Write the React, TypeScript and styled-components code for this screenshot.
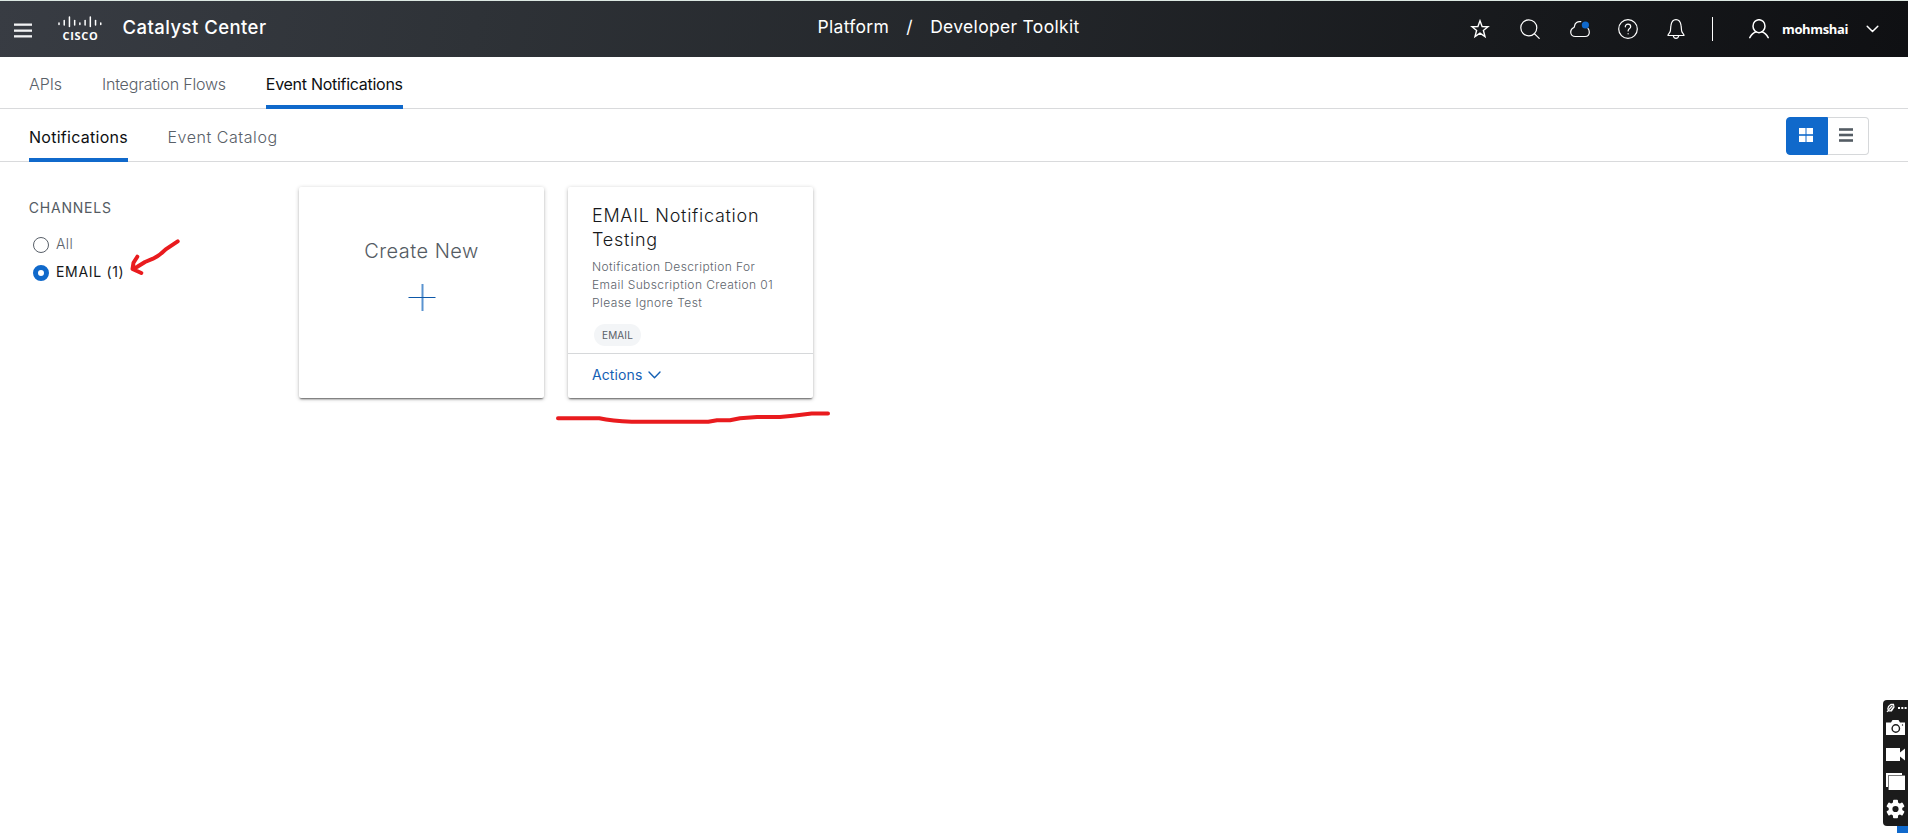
import React from "react";
import styled, { createGlobalStyle } from "styled-components";

const blue = "#1069cb";

const GlobalStyle = createGlobalStyle`
  *, *::before, *::after { box-sizing: border-box; }
  body {
    margin: 0;
    background: #fff;
    font-family: Inter, "Liberation Sans", sans-serif;
    color: #16181b;
    overflow: hidden;
  }
  h1, h2, h3, p { margin: 0; }
  button { font: inherit; border: 0; padding: 0; background: none; cursor: pointer; }
  svg { display: block; flex: none; }
`;

const Page = styled.div`
  position: relative;
  display: flex;
  flex-direction: column;
  width: 100%;
  height: 100vh;
  overflow: hidden;
`;

const Header = styled.header`
  display: grid;
  grid-template-columns: 817.5px 1fr auto;
  align-items: center;
  height: 57px;
  border-top: 1px solid #dce8e2;
  background: linear-gradient(100deg, #383c43 0%, #2e3237 25%, #23262a 53%, #17191c 80%, #0f1013 100%) padding-box;
  color: #fff;
`;

const Brand = styled.div`
  display: flex;
  align-items: center;
  padding-left: 14px;
`;

const MenuIcon = styled.svg`
  margin-top: 3px;
  fill: #f1f2f3;
`;

const Logo = styled.div`
  display: flex;
  flex-direction: column;
  align-items: center;
  width: 44px;
  margin-left: 26px;
`;

const LogoText = styled.span`
  margin-top: 1px;
  font: 700 11px/14px "Open Sans", sans-serif;
  letter-spacing: 0.75px;
  margin-right: -1px;
`;

const ProductName = styled.h1`
  margin: 0 0 5px 20.5px;
  font-size: 18.5px;
  font-weight: 500;
  line-height: 24px;
  letter-spacing: 0.45px;
`;

const Breadcrumb = styled.div`
  display: flex;
  align-items: center;
  margin-bottom: 5px;
  font-size: 17.5px;
  line-height: 24px;
  letter-spacing: 0.31px;
`;

const Slash = styled.span`
  width: 41px;
  padding-left: 17px;
`;

const HeaderTools = styled.div`
  display: flex;
  align-items: center;
  padding-right: 29px;
`;

const ToolButton = styled.button<{ $gap: number }>`
  margin-left: ${(p) => p.$gap}px;
  color: #fff;
`;

const Divider = styled.span`
  width: 1px;
  height: 24px;
  margin: 0 36px 0 26px;
  background: #fff;
`;

const UserName = styled.span`
  width: 68px;
  margin: 0 16px 0 13px;
  font: 700 13px/20px "Open Sans", sans-serif;
  letter-spacing: -0.35px;
`;

const TabBar = styled.nav<{ $height: number }>`
  display: flex;
  flex: none;
  align-items: flex-start;
  gap: 40px;
  height: ${(p) => p.$height}px;
  padding-left: 29px;
  border-bottom: 1px solid #d9dadc;
`;

const Tab = styled.button<{ $active?: boolean; $height: number; $spacing: number; $indent?: number; $drop: number }>`
  display: flex;
  height: ${(p) => p.$height}px;
  padding-top: ${(p) => p.$drop}px;
  border-bottom: 4px solid ${(p) => (p.$active ? blue : "transparent")};
  color: ${(p) => (p.$active ? "#0d0f12" : "#596068")};
  font-size: 16px;
  font-weight: ${(p) => (p.$active ? 400 : 300)};
  line-height: 20px;
  letter-spacing: ${(p) => p.$spacing}px;
  text-indent: ${(p) => p.$indent ?? 0}px;
  white-space: nowrap;
`;

const ViewToggle = styled.div`
  display: flex;
  width: 83px;
  height: 38px;
  margin: 8px 39px 0 auto;
`;

const ToggleButton = styled.button<{ $on?: boolean }>`
  display: flex;
  align-items: center;
  width: ${(p) => (p.$on ? 42 : 41)}px;
  padding: 0 0 2px ${(p) => (p.$on ? 12 : 11)}px;
  border: 1px solid ${(p) => (p.$on ? blue : "#d6d8da")};
  border-left-width: ${(p) => (p.$on ? 1 : 0)}px;
  border-radius: ${(p) => (p.$on ? "4px 0 0 4px" : "0 4px 4px 0")};
  background: ${(p) => (p.$on ? blue : "#fff")};
  color: ${(p) => (p.$on ? "#fff" : "#545c64")};
`;

const Main = styled.main`
  display: flex;
  padding-left: 28px;
`;

const Sidebar = styled.aside`
  width: 271px;
  padding-top: 36px;
`;

const SidebarTitle = styled.h2`
  margin: 0 0 12px 0.7px;
  color: #545b63;
  font-size: 14px;
  font-weight: 400;
  line-height: 20px;
  letter-spacing: 0.8px;
`;

const Option = styled.label<{ $on?: boolean }>`
  display: flex;
  align-items: center;
  gap: 7px;
  height: 28px;
  padding: 0 0 1px 5px;
  color: ${(p) => (p.$on ? "#16181b" : "#5d646c")};
  font-size: 14px;
  font-weight: ${(p) => (p.$on ? 400 : 300)};
  letter-spacing: ${(p) => (p.$on ? 0.68 : 0.4)}px;
`;

const Radio = styled.span<{ $on?: boolean }>`
  width: 16px;
  height: 16px;
  margin-top: 3px;
  border: ${(p) => (p.$on ? `5px solid ${blue}` : "1px solid #596069")};
  border-radius: 50%;
`;

const Cards = styled.section`
  display: flex;
  gap: 24px;
  padding-top: 25px;
`;

const Card = styled.article`
  display: flex;
  flex-direction: column;
  width: 245px;
  height: 211px;
  border-radius: 2px;
  background: #fff;
  box-shadow: 0 2px 2px -1px rgba(0, 0, 0, 0.55), 0 1px 4px rgba(0, 0, 0, 0.24);
`;

const CreateCard = styled(Card)`
  align-items: center;
  padding-top: 52px;
`;

const CreateLabel = styled.h3`
  margin-bottom: 21px;
  color: #545b63;
  font-size: 20px;
  font-weight: 300;
  line-height: 24px;
  letter-spacing: 0.45px;
`;

const CardBody = styled.div`
  flex: 1;
  padding: 17px 22px 0 24px;
`;

const CardTitle = styled.h3`
  color: #16181b;
  font-size: 18px;
  font-weight: 300;
  line-height: 24px;
  letter-spacing: 0.72px;
`;

const CardText = styled.p`
  max-width: 190px;
  margin-top: 6px;
  color: #5d646c;
  font-size: 12px;
  font-weight: 300;
  line-height: 18px;
  letter-spacing: 0.41px;
`;

const Chip = styled.span`
  display: flex;
  align-items: center;
  justify-content: center;
  width: 47px;
  height: 22px;
  margin: 12px 0 0 2px;
  border-radius: 11px;
  background: #f3f5f7;
  color: #596068;
  font-size: 10px;
  letter-spacing: 0.15px;
`;

const CardFooter = styled.footer`
  display: flex;
  align-items: center;
  gap: 6px;
  height: 45px;
  padding: 0 0 3px 24px;
  border-top: 1px solid #d6d8da;
  color: #1460b4;
  font-size: 14px;
  letter-spacing: 0.1px;
`;

const CapturePanel = styled.aside`
  position: absolute;
  right: 0;
  top: 700px;
  display: flex;
  flex-direction: column;
  width: 25px;
  height: 126px;
  padding: 3px 3px 0;
  border-radius: 4px 0 0 4px;
  background: #1b1b1b;
  color: #fff;
`;

const CaptureTop = styled.div`
  display: flex;
  align-items: center;
  gap: 3px;
  height: 10px;
  margin: 0 -2px 7px 0;
`;

const CaptureIcon = styled.div<{ $h: number; $after: number }>`
  height: ${(p) => p.$h}px;
  margin-bottom: ${(p) => p.$after}px;
`;

const CornerPatch = styled.div`
  position: absolute;
  right: 0;
  bottom: 0;
  width: 11px;
  height: 8px;
  background: ${blue};
`;

const Ink = styled.svg<{ $x: number; $y: number }>`
  position: absolute;
  left: ${(p) => p.$x}px;
  top: ${(p) => p.$y}px;
  fill: none;
  stroke: #e91b1e;
  stroke-width: 4;
  stroke-linecap: round;
  stroke-linejoin: round;
  pointer-events: none;
`;

const logoBars = [3, 6, 11, 6, 3, 6, 11, 6, 3];

const LineIcon = ({ children, w = 20, h = 20, sw = 1.2 }: { children: React.ReactNode; w?: number; h?: number; sw?: number }) => (
  <svg width={w} height={h} viewBox={`0 0 ${w} ${h}`} fill="none" stroke="currentColor" strokeWidth={sw} strokeLinecap="round" strokeLinejoin="round">
    {children}
  </svg>
);

export default function App() {
  return (
    <Page>
      <GlobalStyle />
      <Header>
        <Brand>
          <MenuIcon width="18" height="16" viewBox="0 0 18 16">
            <rect width="18" height="2.3" y="0.5" />
            <rect width="18" height="2.3" y="6.5" />
            <rect width="18" height="2.3" y="12.2" />
          </MenuIcon>
          <Logo>
            <svg width="44" height="12" viewBox="0 0 44 12" stroke="#fff" strokeWidth="1.5" strokeLinecap="round">
              {logoBars.map((h, i) => {
                const bottom = h === 11 ? 11 : h === 6 ? 9.6 : 9;
                return <line key={i} x1={1 + i * 5.22} x2={1 + i * 5.22} y1={bottom - h + 1} y2={bottom - 0.5} />;
              })}
            </svg>
            <LogoText>CISCO</LogoText>
          </Logo>
          <ProductName>Catalyst Center</ProductName>
        </Brand>
        <Breadcrumb>
          <span>Platform</span>
          <Slash>/</Slash>
          <span>Developer Toolkit</span>
        </Breadcrumb>
        <HeaderTools>
          <ToolButton $gap={0} aria-label="Favorites">
            <LineIcon sw={1.4}>
              <path strokeLinejoin="miter" d="M10 1.8 12.1 7.5 18 7.7 13.4 11.4 15 17.5 10 14.1 5 17.5 6.6 11.4 2 7.7 7.9 7.5Z" />
            </LineIcon>
          </ToolButton>
          <ToolButton $gap={30} aria-label="Search">
            <LineIcon>
              <circle cx="8.8" cy="8.8" r="8" />
              <path d="m14.6 14.8 4.6 4.6" />
            </LineIcon>
          </ToolButton>
          <ToolButton $gap={30} aria-label="Cloud">
            <LineIcon>
              <path d="M10.8 2.7C7.6 2 4.7 4 4.5 7.2c0 .8-.3 1.2-1 1.5C1.7 9.5.7 10.9.7 12.9c0 2.7 2 4.6 4.6 4.6h9.8c2.5 0 4.2-1.7 4.2-4.2 0-1.800-.5-3-1.300-3.900" />
              <circle cx="15.400" cy="6" r="3.600" fill={blue} stroke="none" />
            </LineIcon>
          </ToolButton>
          <ToolButton $gap={28} aria-label="Help">
            <LineIcon>
              <circle cx="10" cy="10" r="9.300" />
              <path d="M7.300 7.800c0-1.600 1.100-2.600 2.700-2.600s2.700 1 2.700 2.500c0 1.800-2.600 2-2.600 4.200M10.100 14.600v.2" />
            </LineIcon>
          </ToolButton>
          <ToolButton $gap={28} aria-label="Alerts">
            <LineIcon>
              <path d="M2 16.500c0-2 1.900-2.200 2.300-4.300.4-1.800.3-4 .7-6C5.500 3 7.300.7 10 .7s4.500 2.300 5 5.500c.4 2 .3 4.200.7 6 .4 2.100 2.300 2.300 2.300 4.300ZM7.300 16.700c.2 1.600 1.200 2.600 2.700 2.600s2.500-1 2.700-2.600" />
            </LineIcon>
          </ToolButton>
          <Divider />
          <LineIcon sw={1.5}>
            <ellipse cx="10" cy="7.200" rx="6" ry="6.500" />
            <path d="M.8 18.700c1.500-3 3.700-5.200 6.300-6M19.200 18.700c-1.500-3-3.700-5.200-6.300-6" />
          </LineIcon>
          <UserName>mohmshai</UserName>
          <LineIcon w={13} h={8} sw={1.5}>
            <path d="m1.200 1.200 5.300 5.300 5.300-5.300" />
          </LineIcon>
        </HeaderTools>
      </Header>

      <TabBar $height={52}>
        <Tab $height={52} $drop={17} $spacing={-0.08}>APIs</Tab>
        <Tab $height={52} $drop={17} $spacing={-0.2}>Integration Flows</Tab>
        <Tab $height={52} $drop={17} $spacing={-0.28} $active>Event Notifications</Tab>
      </TabBar>
      <TabBar $height={53}>
        <Tab $height={53} $drop={18} $spacing={0.27} $active>Notifications</Tab>
        <Tab $height={53} $drop={18} $spacing={0.55} $indent={-0.5}>Event Catalog</Tab>
        <ViewToggle>
          <ToggleButton $on aria-label="Card view">
            <svg width="14" height="14" viewBox="0 0 14 14" fill="currentColor">
              <rect width="6.500" height="6.200" />
              <rect x="7.500" width="6.500" height="6.200" />
              <rect y="7.800" width="6.500" height="6.200" />
              <rect x="7.500" y="7.800" width="6.500" height="6.200" />
            </svg>
          </ToggleButton>
          <ToggleButton aria-label="List view">
            <svg width="14" height="14" viewBox="0 0 14 14" fill="currentColor">
              <rect width="14" height="2.600" y="0.200" />
              <rect width="14" height="2.600" y="5.700" />
              <rect width="14" height="2.600" y="11.200" />
            </svg>
          </ToggleButton>
        </ViewToggle>
      </TabBar>

      <Main>
        <Sidebar>
          <SidebarTitle>CHANNELS</SidebarTitle>
          <Option><Radio />All</Option>
          <Option $on><Radio $on />EMAIL (1)</Option>
        </Sidebar>
        <Cards>
          <CreateCard>
            <CreateLabel>Create New</CreateLabel>
            <svg width="28" height="27" viewBox="0 0 28 27">
              <rect x="13.500" width="2" height="27" fill="#5a93d0" />
              <rect x="0.500" y="13" width="27" height="1" fill="#0d58a8" />
            </svg>
          </CreateCard>
          <Card>
            <CardBody>
              <CardTitle>EMAIL Notification Testing</CardTitle>
              <CardText>Notification Description For Email Subscription Creation 01 Please Ignore Test</CardText>
              <Chip>EMAIL</Chip>
            </CardBody>
            <CardFooter>
              Actions
              <LineIcon w={13} h={8} sw={1.4}>
                <path d="m1 1 5.500 5.700L12 1" />
              </LineIcon>
            </CardFooter>
          </Card>
        </Cards>
      </Main>

      <Ink $x={125} $y={235.5} width="60" height="42">
        <path d="M52.700 5.300 40.700 13.300Q34 20 28 22.700L20 26 12.300 30.700 8 33M12.300 20.700 8.500 26.700 7.500 33 16.300 37" />
      </Ink>
      <Ink $x={550} $y={405} width="290" height="25">
        <path d="M8 13.300H49.300Q62 16 81.700 16.700H158.300L167 15.300H180L190 13.300 207 12H230L243 10.700 261.700 8.600H278" />
      </Ink>

      <CornerPatch />
      <CapturePanel>
        <CaptureTop>
          <svg width="9" height="10" viewBox="0 0 9 10" fill="none" stroke="currentColor" strokeWidth="1.200">
            <path d="M1 9l1.500-2M2.500 3.500 5 1.300h2.500L8 4 5.500 7.800H3L1.800 6ZM3 6.500l3.500-4M4.800 7.500 7.500 4" />
          </svg>
          <svg width="10" height="2" viewBox="0 0 10 2" fill="currentColor">
            <rect width="2" height="2" />
            <rect x="3.300" width="2" height="2" />
            <rect x="6.600" width="2" height="2" />
          </svg>
        </CaptureTop>
        <CaptureIcon $h={15} $after={13}>
          <svg width="19" height="15" viewBox="0 0 19 15">
            <path fill="#fff" d="M0 2.500h5L6.500 0h6L14 2.500h5V15H0Z" />
            <circle cx="9.800" cy="8.500" r="3.700" fill="none" stroke="#1b1b1b" strokeWidth="1.400" />
            <circle cx="16.500" cy="5" r=".7" fill="#1b1b1b" />
          </svg>
        </CaptureIcon>
        <CaptureIcon $h={13} $after={12}>
          <svg width="19" height="13" viewBox="0 0 19 13" fill="#fff">
            <path d="M0 0h14v4.500L19 .5v12L14 8.500V13H0Z" />
          </svg>
        </CaptureIcon>
        <CaptureIcon $h={17} $after={9}>
          <svg width="19" height="17" viewBox="0 0 19 17">
            <rect width="16" height="14" fill="#fff" />
            <rect x="2.500" y="2.500" width="16.500" height="14.500" fill="#fff" stroke="#777" />
            <rect x="3" y="3" width="16" height="14" fill="#fff" />
          </svg>
        </CaptureIcon>
        <CaptureIcon $h={20} $after={0}>
          <svg width="19" height="20" viewBox="0 0 19 20">
            <g fill="#fff">
              {[0, 60, 120].map((a) => (
                <rect key={a} x="7" y="0.800" width="5" height="18.400" rx="1" transform={`rotate(${a} 9.500 10)`} />
              ))}
              <circle cx="9.500" cy="10" r="6.900" />
            </g>
            <circle cx="9.500" cy="10" r="3.100" fill="#1b1b1b" />
          </svg>
        </CaptureIcon>
      </CapturePanel>
    </Page>
  );
}
